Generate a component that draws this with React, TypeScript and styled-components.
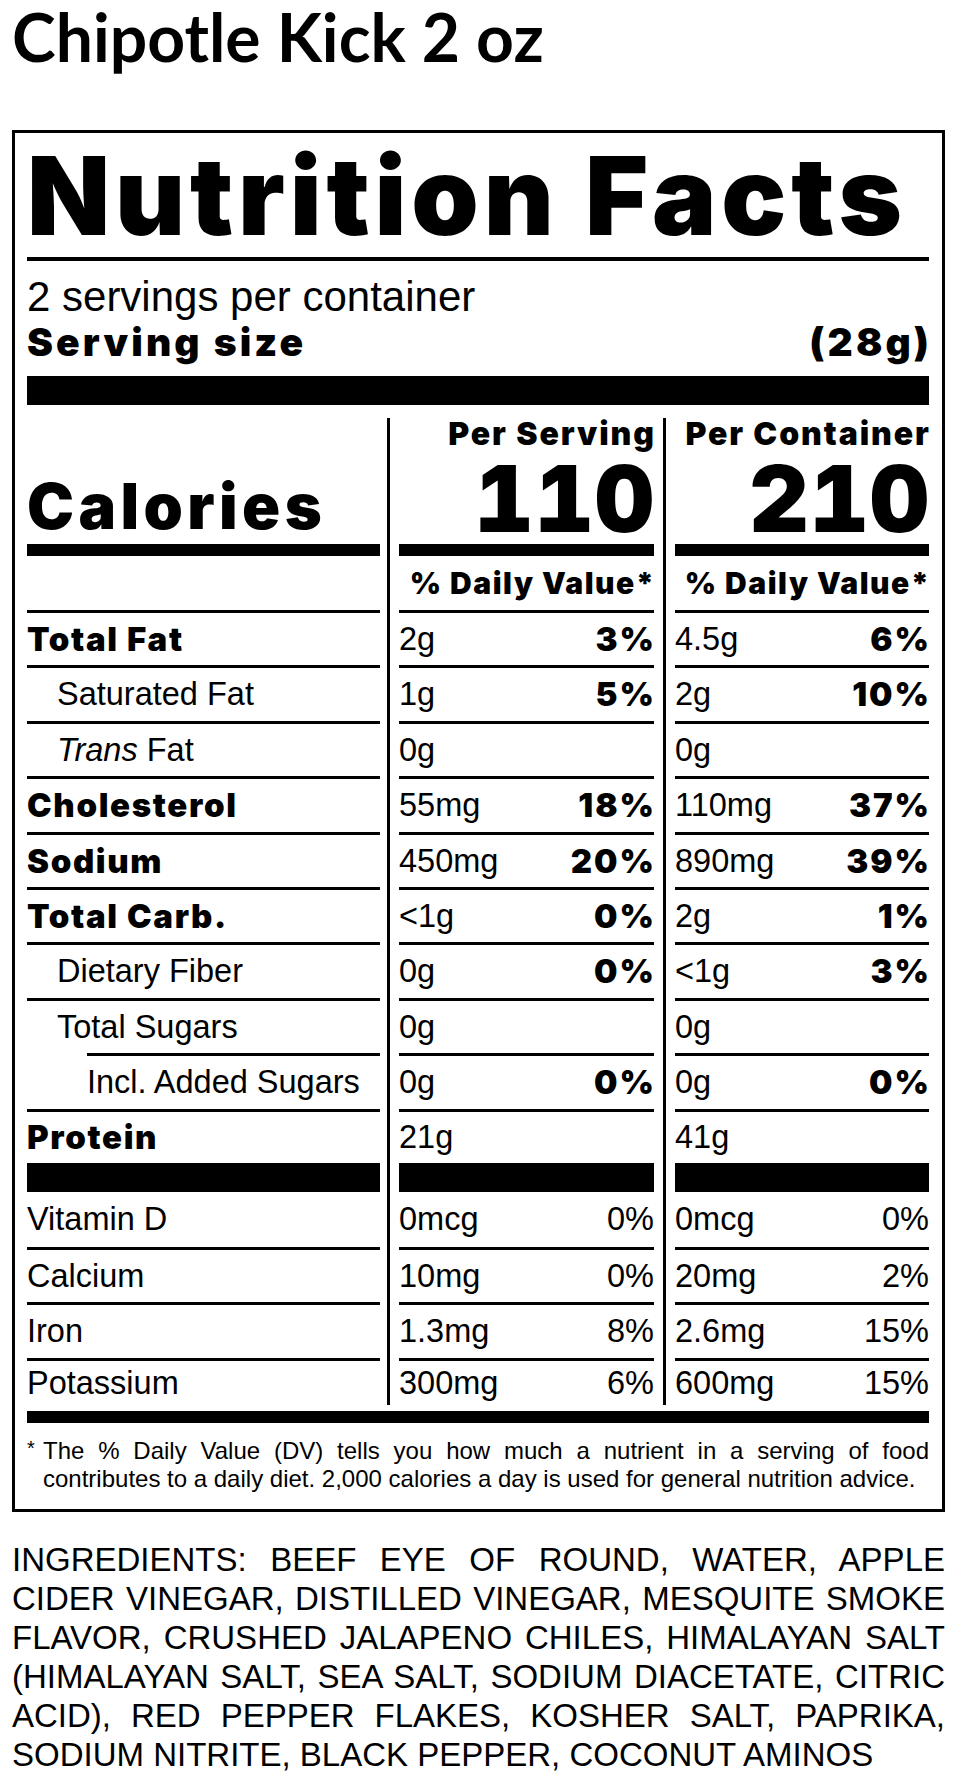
import React from "react";
import styled, { createGlobalStyle, css } from "styled-components";

const GlobalStyle = createGlobalStyle`
  html, body {
    margin: 0;
    padding: 0;
    background: #fff;
  }
  body {
    font-family: "Liberation Sans", Arial, sans-serif;
    color: #000;
  }
`;

// heavy grotesque, spaced a little wider to get close to Arial Black's proportions
const heavy = css`
  font-family: Inter, "Liberation Sans", sans-serif;
  font-weight: 900;
  letter-spacing: 0.06em;
`;

const Page = styled.main`
  width: 957px;
  box-sizing: border-box;
  padding: 2px 12px 30px;
`;

const Title = styled.h1`
  margin: 0;
  font-family: Lato, "Liberation Sans", sans-serif;
  font-weight: 700;
  font-size: 66px;
  line-height: 70px;
`;

const Label = styled.section`
  margin-top: 58px;
  border: 3px solid #000;
  padding: 0 13px 16px 12px;
`;

const Heading = styled.h2`
  ${heavy};
  margin: 0;
  padding-top: 10px;
  font-size: 108px;
  line-height: 106px;
  letter-spacing: 0.045em;
  white-space: nowrap;
`;

const Rule = styled.div<{ $w: number; $gap: number; $inset?: number }>`
  height: ${(p) => p.$w}px;
  margin-top: ${(p) => p.$gap}px;
  margin-left: ${(p) => p.$inset ?? 0}px;
  background: #000;
`;

const Servings = styled.p`
  margin: 13px 0 0;
  font-size: 42px;
  line-height: 45px;
`;

const ServingSize = styled.div`
  ${heavy};
  display: flex;
  justify-content: space-between;
  font-size: 39px;
  line-height: 45px;
  letter-spacing: 0.08em;

  & > span:last-child {
    margin-right: -0.08em;
  }
`;

const Table = styled.div`
  margin-top: 13px;
`;

const Row = styled.div`
  display: grid;
  grid-template-columns: 360px 276px 266px;
`;

const Col = styled.div<{ $pos: number }>`
  display: flex;
  flex-direction: column;
  ${(p) =>
    p.$pos === 0
      ? css`
          padding-right: 7px;
        `
      : css`
          border-left: 3px solid #000;
          padding-left: 9px;
          padding-right: ${p.$pos === 1 ? 9 : 0}px;
        `}
`;

const Body = styled.div<{ $h: number }>`
  height: ${(p) => p.$h}px;
  display: flex;
  align-items: center;
  justify-content: space-between;
  font-size: 32.5px;
  line-height: ${(p) => p.$h}px;
  white-space: nowrap;
`;

const HeadBody = styled.div<{ $end?: boolean }>`
  height: 126px;
  display: flex;
  flex-direction: column;
  justify-content: ${(p) => (p.$end ? "flex-end" : "space-between")};
  align-items: ${(p) => (p.$end ? "flex-start" : "flex-end")};
  white-space: nowrap;
`;

const Calories = styled.div`
  ${heavy};
  font-size: 63px;
  line-height: 60px;
  letter-spacing: 0.07em;
  padding-bottom: 8px;
`;

const PerLabel = styled.div`
  ${heavy};
  font-size: 32px;
  line-height: 32px;
  margin-right: -0.06em;
`;

const Kcal = styled.div`
  ${heavy};
  font-size: 92px;
  line-height: 90px;
  letter-spacing: 0.01em;
  font-variant-numeric: tabular-nums;
  margin-right: -0.01em;
`;

const DailyValue = styled.span`
  ${heavy};
  font-size: 30px;
  letter-spacing: 0.05em;
  margin-left: auto;
  margin-right: -0.05em;
`;

const Name = styled.span<{ $bold?: boolean; $indent?: number }>`
  padding-left: ${(p) => (p.$indent ?? 0) * 30}px;
  ${(p) =>
    p.$bold &&
    css`
      ${heavy};
      font-size: 33px;
      letter-spacing: 0.05em;
    `}
`;

const Percent = styled.span<{ $bold?: boolean }>`
  ${(p) =>
    p.$bold &&
    css`
      ${heavy};
      font-size: 33px;
      margin-right: -0.06em;
    `}
`;

const Footnote = styled.div`
  display: flex;
  margin-top: 14px;
  font-size: 24px;
  line-height: 28px;
`;

const Star = styled.span`
  flex: none;
  width: 16px;
  font-size: 20px;
  line-height: 22px;
`;

const FootText = styled.p`
  margin: 0;
  flex: 1;
  text-align: justify;
`;

const Ingredients = styled.p`
  margin: 28px 0 0;
  font-size: 33px;
  line-height: 39px;
  text-align: justify;
`;

type Nutrient = {
  name: React.ReactNode;
  bold?: boolean;
  indent?: number;
  serving: [string, string];
  container: [string, string];
  ruleInset?: number;
  rule?: number;
  h?: number;
};

const nutrients: Nutrient[] = [
  { name: "Total Fat", bold: true, serving: ["2g", "3%"], container: ["4.5g", "6%"] },
  { name: "Saturated Fat", indent: 1, serving: ["1g", "5%"], container: ["2g", "10%"] },
  {
    name: (
      <>
        <i>Trans</i> Fat
      </>
    ),
    indent: 1,
    serving: ["0g", ""],
    container: ["0g", ""],
  },
  { name: "Cholesterol", bold: true, serving: ["55mg", "18%"], container: ["110mg", "37%"] },
  { name: "Sodium", bold: true, serving: ["450mg", "20%"], container: ["890mg", "39%"] },
  { name: "Total Carb.", bold: true, serving: ["<1g", "0%"], container: ["2g", "1%"] },
  { name: "Dietary Fiber", indent: 1, serving: ["0g", "0%"], container: ["<1g", "3%"] },
  { name: "Total Sugars", indent: 1, serving: ["0g", ""], container: ["0g", ""], ruleInset: 60 },
  { name: "Incl. Added Sugars", indent: 2, serving: ["0g", "0%"], container: ["0g", "0%"] },
  { name: "Protein", bold: true, serving: ["21g", ""], container: ["41g", ""], rule: 29, h: 51 },
];

const vitamins: { name: string; serving: [string, string]; container: [string, string]; h: number; rule: number }[] = [
  { name: "Vitamin D", serving: ["0mcg", "0%"], container: ["0mcg", "0%"], h: 55, rule: 3 },
  { name: "Calcium", serving: ["10mg", "0%"], container: ["20mg", "2%"], h: 52, rule: 3 },
  { name: "Iron", serving: ["1.3mg", "8%"], container: ["2.6mg", "15%"], h: 53, rule: 3 },
  { name: "Potassium", serving: ["300mg", "6%"], container: ["600mg", "15%"], h: 44, rule: 0 },
];

function ValueCell({ pos, value, bold, h, rule }: { pos: number; value: [string, string]; bold?: boolean; h: number; rule: number }) {
  return (
    <Col $pos={pos}>
      <Body $h={h}>
        <span>{value[0]}</span>
        <Percent $bold={bold}>{value[1]}</Percent>
      </Body>
      {rule > 0 && <Rule $w={rule} $gap={0} />}
    </Col>
  );
}

export default function App() {
  return (
    <>
      <GlobalStyle />
      <Page>
        <Title>Chipotle Kick 2 oz</Title>
        <Label>
          <Heading>Nutrition Facts</Heading>
          <Rule $w={4} $gap={8} />
          <Servings>2 servings per container</Servings>
          <ServingSize>
            <span>Serving size</span>
            <span>(28g)</span>
          </ServingSize>
          <Rule $w={29} $gap={12} />

          <Table>
            <Row>
              <Col $pos={0}>
                <HeadBody $end>
                  <Calories>Calories</Calories>
                </HeadBody>
                <Rule $w={12} $gap={0} />
              </Col>
              <Col $pos={1}>
                <HeadBody>
                  <PerLabel>Per Serving</PerLabel>
                  <Kcal>110</Kcal>
                </HeadBody>
                <Rule $w={12} $gap={0} />
              </Col>
              <Col $pos={2}>
                <HeadBody>
                  <PerLabel>Per Container</PerLabel>
                  <Kcal>210</Kcal>
                </HeadBody>
                <Rule $w={12} $gap={0} />
              </Col>
            </Row>

            <Row>
              <Col $pos={0}>
                <Body $h={54} />
                <Rule $w={3} $gap={0} />
              </Col>
              <Col $pos={1}>
                <Body $h={54}>
                  <DailyValue>% Daily Value*</DailyValue>
                </Body>
                <Rule $w={3} $gap={0} />
              </Col>
              <Col $pos={2}>
                <Body $h={54}>
                  <DailyValue>% Daily Value*</DailyValue>
                </Body>
                <Rule $w={3} $gap={0} />
              </Col>
            </Row>

            {nutrients.map((n, i) => {
              const h = n.h ?? 52.4;
              const rule = n.rule ?? 3;
              return (
                <Row key={i}>
                  <Col $pos={0}>
                    <Body $h={h}>
                      <Name $bold={n.bold} $indent={n.indent}>
                        {n.name}
                      </Name>
                    </Body>
                    <Rule $w={rule} $gap={0} $inset={n.ruleInset} />
                  </Col>
                  <ValueCell pos={1} value={n.serving} bold h={h} rule={rule} />
                  <ValueCell pos={2} value={n.container} bold h={h} rule={rule} />
                </Row>
              );
            })}

            {vitamins.map((v) => (
              <Row key={v.name}>
                <Col $pos={0}>
                  <Body $h={v.h}>
                    <Name>{v.name}</Name>
                  </Body>
                  {v.rule > 0 && <Rule $w={v.rule} $gap={0} />}
                </Col>
                <ValueCell pos={1} value={v.serving} h={v.h} rule={v.rule} />
                <ValueCell pos={2} value={v.container} h={v.h} rule={v.rule} />
              </Row>
            ))}
          </Table>

          <Rule $w={12} $gap={6} />
          <Footnote>
            <Star>*</Star>
            <FootText>
              The % Daily Value (DV) tells you how much a nutrient in a serving of food contributes to a daily diet.
              2,000 calories a day is used for general nutrition advice.
            </FootText>
          </Footnote>
        </Label>

        <Ingredients>
          INGREDIENTS: BEEF EYE OF ROUND, WATER, APPLE CIDER VINEGAR, DISTILLED VINEGAR, MESQUITE SMOKE FLAVOR,
          CRUSHED JALAPENO CHILES, HIMALAYAN SALT (HIMALAYAN SALT, SEA SALT, SODIUM DIACETATE, CITRIC ACID), RED
          PEPPER FLAKES, KOSHER SALT, PAPRIKA, SODIUM NITRITE, BLACK PEPPER, COCONUT AMINOS
        </Ingredients>
      </Page>
    </>
  );
}
